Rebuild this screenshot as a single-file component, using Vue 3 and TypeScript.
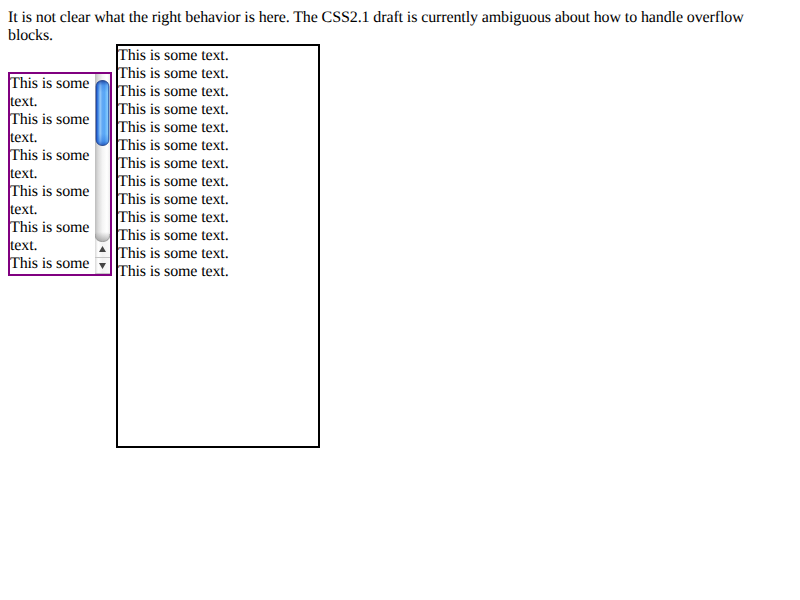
<script setup lang="ts">
const narrowLines: string[] = [
  ...Array.from({ length: 5 }, () => 'This is some text.'),
  'This is some',
]
const wideLines: string[] = Array.from({ length: 13 }, () => 'This is some text.')
</script>

<template>
  <main class="page">
    <p class="intro">It is not clear what the right behavior is here. The CSS2.1 draft is currently ambiguous about how to handle overflow<br />blocks.</p>
    <div class="row">
      <section class="scroller">
        <div class="content">
          <div v-for="(line, i) in narrowLines" :key="i" class="line">{{ line }}</div>
        </div>
        <svg class="bar" width="15" height="200" viewBox="0 0 15 200">
          <defs>
            <linearGradient id="track" x1="0" x2="1" y1="0" y2="0">
              <stop offset="0" stop-color="#bcbcbc" />
              <stop offset="0.2" stop-color="#dadada" />
              <stop offset="0.5" stop-color="#f4f4f4" />
              <stop offset="0.8" stop-color="#fff" />
              <stop offset="1" stop-color="#ececec" />
            </linearGradient>
            <linearGradient id="button" x1="0" x2="1" y1="0" y2="0">
              <stop offset="0" stop-color="#d8d8d8" />
              <stop offset="0.2" stop-color="#fff" />
              <stop offset="0.5" stop-color="#f2f2f2" />
              <stop offset="1" stop-color="#fafafa" />
            </linearGradient>
            <linearGradient id="shade" x1="0" x2="0" y1="0" y2="1">
              <stop offset="0" stop-color="#777" stop-opacity="0" />
              <stop offset="1" stop-color="#777" stop-opacity="0.6" />
            </linearGradient>
            <linearGradient id="thumb" x1="0" x2="1" y1="0" y2="0">
              <stop offset="0" stop-color="#1546c0" />
              <stop offset="0.16" stop-color="#3f86e4" />
              <stop offset="0.32" stop-color="#9accfa" />
              <stop offset="0.48" stop-color="#62a9f4" />
              <stop offset="0.65" stop-color="#58a6f6" />
              <stop offset="0.88" stop-color="#84ccff" />
              <stop offset="1" stop-color="#3c78d0" />
            </linearGradient>
            <linearGradient id="cap" x1="0" x2="0" y1="0" y2="1">
              <stop offset="0" stop-color="#102c84" stop-opacity="0.8" />
              <stop offset="0.08" stop-color="#2060d0" stop-opacity="0.25" />
              <stop offset="0.18" stop-color="#2060d0" stop-opacity="0" />
              <stop offset="0.82" stop-color="#2060d0" stop-opacity="0" />
              <stop offset="0.93" stop-color="#1858d0" stop-opacity="0.3" />
              <stop offset="1" stop-color="#1038a0" stop-opacity="0.7" />
            </linearGradient>
          </defs>
          <rect width="15" height="200" fill="url(#track)" />
          <rect x="1" y="6.500" width="13" height="65" rx="6" fill="url(#thumb)" />
          <rect x="1" y="6.500" width="13" height="65" rx="6" fill="url(#cap)" stroke="#233f80" stroke-opacity="0.75" />
          <rect y="158" width="15" height="10" fill="url(#shade)" />
          <path d="M0 160C0 165 3 167.500 7.500 167.500S15 165 15 160V200H0Z" fill="url(#button)" />
          <path d="M0 160C0 165 3 167.500 7.500 167.500S15 165 15 160" fill="none" stroke="#999" />
          <path d="M0 183.500H15M0 199.500H15" stroke="#c4c4c4" />
          <path d="M4 178H11L7.500 172ZM4 189H11L7.500 195Z" fill="#444" />
        </svg>
      </section>
      <section class="wide">
        <div v-for="(line, i) in wideLines" :key="i" class="line">{{ line }}</div>
      </section>
    </div>
  </main>
</template>

<style>
body { background: #fff; }
</style>

<style scoped>
.page { padding: 9px 8px 8px; color: #000; font: 16px/18px "Liberation Serif", serif; text-rendering: geometricPrecision; }
.intro { margin: 0 0 -1px; letter-spacing: -0.113px; white-space: nowrap; }
.row { display: flex; align-items: flex-start; gap: 4px; letter-spacing: -0.13px; }
.scroller { display: flex; box-sizing: border-box; width: 104px; height: 204px; margin-top: 28px; border: 2px solid purple; overflow: hidden; }
.content { box-sizing: border-box; width: 85px; height: 200px; padding-top: 1px; overflow: hidden; }
.bar { flex: none; display: block; }
.wide { box-sizing: border-box; width: 204px; height: 404px; padding-top: 1px; border: 2px solid #000; }
</style>
